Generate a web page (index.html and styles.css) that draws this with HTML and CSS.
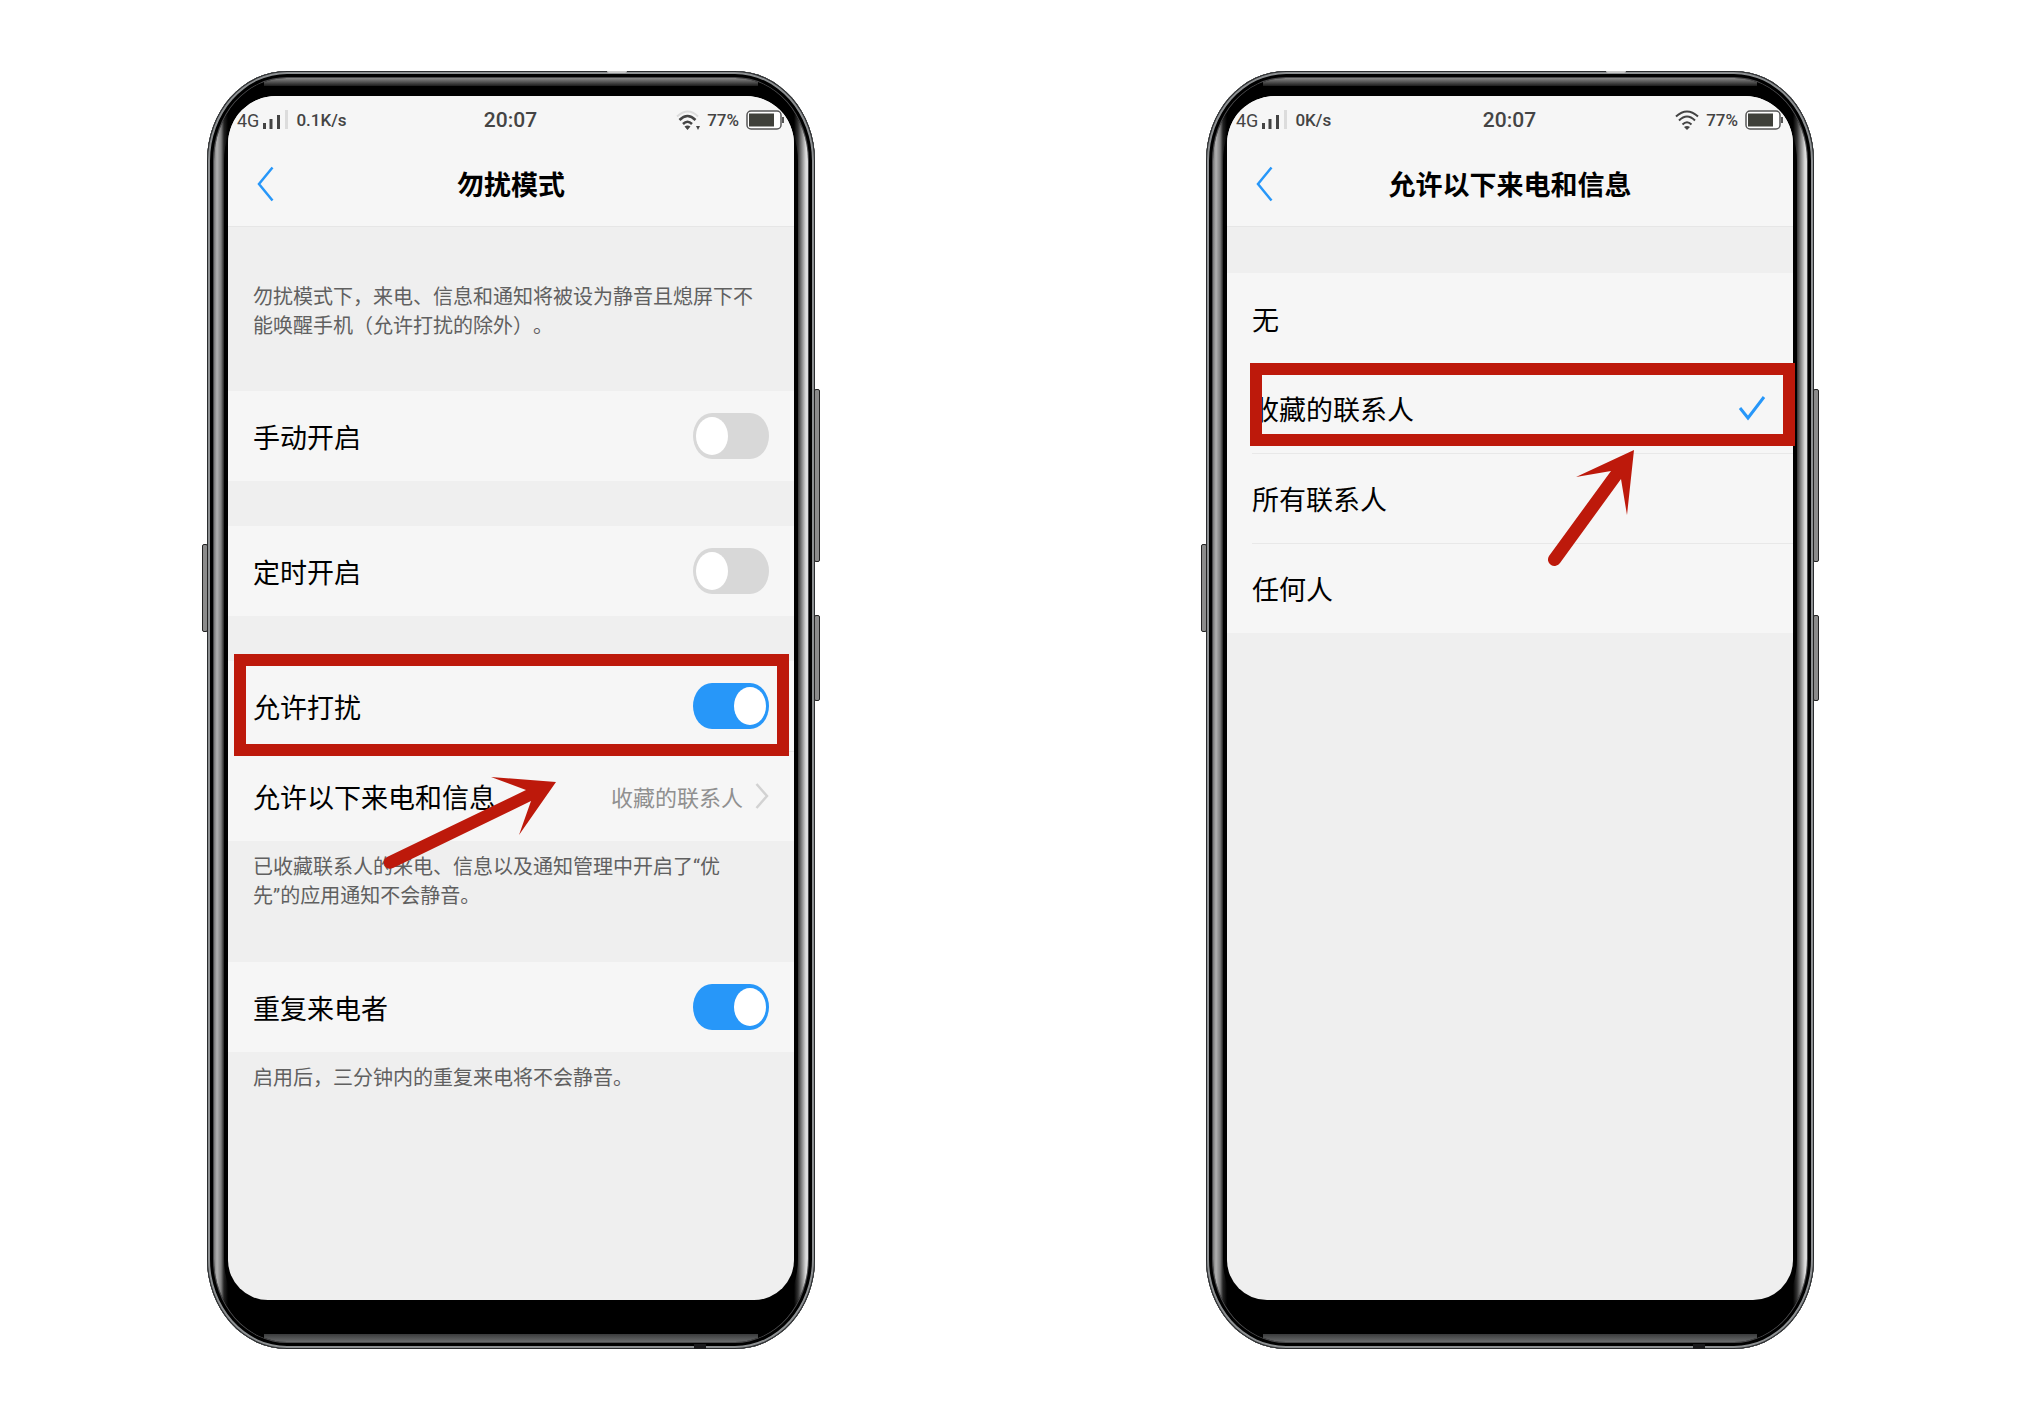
FILE: index.html
```html
<!DOCTYPE html>
<html lang="zh-CN">
<head>
  <meta charset="UTF-8" />
  <meta name="viewport" content="width=device-width, initial-scale=1.0"/>
  <title>勿扰模式</title>
  <link rel="stylesheet" href="styles.css">
</head>
<body>

  <!-- 勿扰模式 -->
  <div class="phone">
    <span class="key key-left"></span>
    <span class="key key-volume"></span>
    <span class="key key-power"></span>
    <span class="mic"></span>
    <span class="port"></span>
    <div class="bezel">
      <div class="glass">
        <main class="screen">
          <div class="status">
            <div class="status-left">
              <span class="network">4G</span>
              <svg class="signal" width="26" height="20" viewBox="0 0 26 20">
                <path d="M1.500 13v6M8 9v10M15.500 5v14" stroke="#444" stroke-width="3"/>
                <path d="M23.500 0v19" stroke="#dcdcdc" stroke-width="3"/>
              </svg>
              <span class="speed">0.1K/s</span>
            </div>
            <span class="time">20:07</span>
            <div class="status-right">
              <svg class="wifi" width="24" height="20" viewBox="0 0 24 20">
                <path d="M1 6.500q11-10 21 0" fill="none" stroke="#dcdcdc" stroke-width="2"/>
                <path d="M3.500 10q8-8 16 0M7 14q4.500-4.500 9 0" fill="none" stroke="#444" stroke-width="2.500"/>
                <path d="M8.500 16.500q3-2 6 0l-3 3.500zM20 16h4l-2 4z" fill="#444"/>
              </svg>
              <span class="percent">77%</span>
              <svg class="battery" width="38" height="20" viewBox="0 0 38 20">
                <rect x="1" y="1" width="34" height="18" rx="4" fill="#fff" stroke="#555" stroke-width="1.500"/>
                <rect x="3" y="3.500" width="25" height="13" fill="#3f403a"/>
                <path d="M37 7v6" stroke="#555" stroke-width="2"/>
              </svg>
            </div>
          </div>
          <header class="titlebar">
            <button class="back" aria-label="返回">
              <svg width="17" height="36" viewBox="0 0 17 36">
                <path d="M15.500 1.500L2 18l13.500 16.500" fill="none" stroke="#2797f9" stroke-width="2.500"/>
              </svg>
            </button>
            <h1>勿扰模式</h1>
          </header>

          <p class="note intro">勿扰模式下，来电、信息和通知将被设为静音且熄屏下不能唤醒手机（允许打扰的除外）。</p>

          <div class="group">
            <div class="row">
              <label for="manual">手动开启</label>
              <input class="switch" type="checkbox" id="manual">
            </div>
          </div>
          <div class="group">
            <div class="row">
              <label for="timer">定时开启</label>
              <input class="switch" type="checkbox" id="timer">
            </div>
          </div>
          <div class="group">
            <div class="row">
              <label for="allow">允许打扰</label>
              <input class="switch" type="checkbox" id="allow" checked>
              <span class="mark mark-allow"></span>
            </div>
            <div class="row">
              <a class="link" href="#contacts">
                <span>允许以下来电和信息</span>
                <span class="value">收藏的联系人</span>
                <svg width="14" height="28" viewBox="0 0 14 28">
                  <path d="M1.500 2L12 14 1.500 26" fill="none" stroke="#d2d2d2" stroke-width="2.500"/>
                </svg>
              </a>
              <svg class="arrow arrow-allow" width="180" height="96" viewBox="0 0 180 96">
                <path d="M177 9L112 4l35 13L8 84a6 6 0 0 0 6 11L152 28 140 62z"/>
              </svg>
            </div>
          </div>
          <p class="note">已收藏联系人的来电、信息以及通知管理中开启了“优<br>先”的应用通知不会静音。</p>
          <div class="group">
            <div class="row">
              <label for="repeat">重复来电者</label>
              <input class="switch" type="checkbox" id="repeat" checked>
            </div>
          </div>
          <p class="note">启用后，三分钟内的重复来电将不会静音。</p>
        </main>
      </div>
    </div>
  </div>

  <!-- 允许以下来电和信息 -->
  <div class="phone" id="contacts">
    <span class="key key-left"></span>
    <span class="key key-volume"></span>
    <span class="key key-power"></span>
    <span class="mic"></span>
    <span class="port"></span>
    <div class="bezel">
      <div class="glass">
        <main class="screen">
          <div class="status">
            <div class="status-left">
              <span class="network">4G</span>
              <svg class="signal" width="26" height="20" viewBox="0 0 26 20">
                <path d="M1.500 13v6M8 9v10M15.500 5v14" stroke="#444" stroke-width="3"/>
                <path d="M23.500 0v19" stroke="#dcdcdc" stroke-width="3"/>
              </svg>
              <span class="speed">0K/s</span>
            </div>
            <span class="time">20:07</span>
            <div class="status-right">
              <svg class="wifi" width="24" height="20" viewBox="0 0 24 20">
                <path d="M1 6.500q11-10 22 0M4 10.500q8-8 16 0M7.500 14.500q4.500-4.500 9 0" fill="none" stroke="#444" stroke-width="2"/>
                <path d="M9 17q3-2 6 0l-3 3z" fill="#444"/>
              </svg>
              <span class="percent">77%</span>
              <svg class="battery" width="38" height="20" viewBox="0 0 38 20">
                <rect x="1" y="1" width="34" height="18" rx="4" fill="#fff" stroke="#555" stroke-width="1.500"/>
                <rect x="3" y="3.500" width="25" height="13" fill="#3f403a"/>
                <path d="M37 7v6" stroke="#555" stroke-width="2"/>
              </svg>
            </div>
          </div>
          <header class="titlebar">
            <button class="back" aria-label="返回">
              <svg width="17" height="36" viewBox="0 0 17 36">
                <path d="M15.500 1.500L2 18l13.500 16.500" fill="none" stroke="#2797f9" stroke-width="2.500"/>
              </svg>
            </button>
            <h1>允许以下来电和信息</h1>
          </header>

          <div class="group options">
            <label class="row"><input type="radio" name="who">无</label>
            <label class="row">
              <input type="radio" name="who" checked>收藏的联系人
              <svg class="tick" width="28" height="26" viewBox="0 0 28 26">
                <path d="M2 13l8 10L26 2" fill="none" stroke="#2797f9" stroke-width="3"/>
              </svg>
              <span class="mark mark-contacts"></span>
            </label>
            <label class="row">
              <input type="radio" name="who">所有联系人
              <svg class="arrow arrow-contacts" width="95" height="125" viewBox="0 0 95 125">
                <path d="M89 5L31 32l35-6L4 111a6 6 0 0 0 11 7L76 34l6 36z"/>
              </svg>
            </label>
            <label class="row"><input type="radio" name="who">任何人</label>
          </div>
        </main>
      </div>
    </div>
  </div>

</body>
</html>
```

FILE: styles.css
```css
* {
  box-sizing: border-box;
}

body {
  margin: 0;
  padding: 71px 0 71px 1px;
  background-color: #ffffff;
  font-family: Roboto, "Noto Sans CJK SC", sans-serif;
  text-spacing-trim: space-all;
  color: #000;
  display: flex;
  justify-content: center;
  align-items: flex-start;
  gap: 391px;
}

/* phone body */
.phone {
  position: relative;
  flex: 0 1 608px;
  padding: 7px;
  border-radius: 80px / 90px;
  background: #000;
  box-shadow: inset 0 0 0 1px #2a2c2e, inset 0 0 0 3px #8d9092, inset 0 0 0 6px #000, inset 0 0 0 7px #4a4a4c;
}

.bezel {
  padding: 8px 10px;
  border-radius: 73px / 83px;
  background:
    linear-gradient(to bottom, #8a8a8a, #1c1c1c) top / calc(100% - 100px) 8px no-repeat,
    linear-gradient(to bottom, #3a3b3c, #6a6c6d) bottom / calc(100% - 100px) 8px no-repeat,
    linear-gradient(to right, #777, #b0b0b0 3px, #808080 7px, #222 10px, #000 14px, #000 calc(100% - 14px), #333 calc(100% - 10px), #8a8a8a calc(100% - 6px), #ddd calc(100% - 2px));
}

.glass {
  padding: 10px 4px 34px;
  border-radius: 64px / 76px;
  background: #000;
}

.screen {
  min-height: 1204px;
  border-radius: 48px 48px 40px 40px;
  background: #efefef;
}

.key {
  position: absolute;
  width: 6px;
  border: 1px solid #222;
  border-radius: 2px;
  background: #8b8b8b;
}

.key-left {
  left: -5px;
  top: 473px;
  height: 88px;
}

.key-volume {
  right: -5px;
  top: 318px;
  height: 173px;
}

.key-power {
  right: -5px;
  top: 544px;
  height: 86px;
}

.mic {
  position: absolute;
  top: 0;
  left: 400px;
  width: 20px;
  height: 2px;
  border-radius: 0 0 10px 10px;
  background: #c8c8c8;
}

.port {
  position: absolute;
  bottom: 0;
  right: 109px;
  width: 12px;
  height: 5px;
  background: #1a1a1c;
}

/* status bar */
.status {
  display: grid;
  grid-template-columns: 1fr auto 1fr;
  align-items: center;
  height: 48px;
  padding: 0 10px 0 9px;
  border-radius: 48px 48px 0 0;
  overflow: hidden;
  background: #f6f6f6;
  color: #444;
  font-size: 17px;
  font-weight: 500;
}

.status-left,
.status-right {
  display: flex;
  align-items: center;
}

.status-right {
  justify-content: flex-end;
  gap: 7px;
}

.network {
  font-size: 18px;
  font-weight: 400;
}

.signal {
  margin: 0 7px 0 4px;
}

.time {
  font-size: 21px;
}

.titlebar {
  position: relative;
  display: flex;
  align-items: center;
  justify-content: center;
  height: 83px;
  padding-bottom: 3px;
  border-bottom: 1px solid #e6e6e6;
  background: #f6f6f6;
}

.back {
  position: absolute;
  left: 29px;
  display: flex;
  padding: 0;
  border: none;
  background: none;
  cursor: pointer;
}

h1 {
  margin: 0;
  font-size: 27px;
  font-weight: 700;
}

/* settings list */
.note {
  margin: 0;
  padding: 12px 25px 51px;
  font-size: 20px;
  line-height: 29px;
  color: #606060;
}

.intro {
  padding: 56px 25px 50px;
}

.group {
  background: #f6f6f6;
}

.group + .group {
  margin-top: 45px;
}

.row {
  position: relative;
  display: flex;
  align-items: center;
  justify-content: space-between;
  height: 90px;
  padding: 0 25px;
  font-size: 27px;
}

.row + .row::before {
  content: "";
  position: absolute;
  top: 0;
  left: 25px;
  right: 0;
  height: 1px;
  background: #e8e8e8;
}

.link {
  flex: 1;
  display: flex;
  align-items: center;
  color: inherit;
  text-decoration: none;
}

.value {
  margin: 0 12px 0 auto;
  font-size: 22px;
  color: #909090;
}

.switch {
  appearance: none;
  display: flex;
  width: 76px;
  height: 46px;
  margin: 0;
  padding: 4px 3px;
  border-radius: 19px / 23px;
  background: #d8d8d8;
  cursor: pointer;
}

.switch::before {
  content: "";
  width: 32px;
  border-radius: 50%;
  background: #fff;
}

.switch:checked {
  justify-content: flex-end;
  background: #2797f9;
}

.options {
  margin-top: 46px;
}

.options input {
  position: absolute;
  opacity: 0;
}

.tick {
  margin-right: 2px;
}

/* red highlights */
.mark {
  position: absolute;
  z-index: 1;
  border: 12px solid #bd190b;
  pointer-events: none;
}

.mark-allow {
  top: -7px;
  bottom: -5px;
  left: 6px;
  right: 5px;
}

.mark-contacts {
  top: 0;
  bottom: 7px;
  left: 23px;
  right: -2px;
}

.arrow {
  position: absolute;
  z-index: 2;
  fill: #bd190b;
  pointer-events: none;
}

.arrow-allow {
  left: 151px;
  top: 22px;
}

.arrow-contacts {
  left: 318px;
  top: -8px;
}
```
